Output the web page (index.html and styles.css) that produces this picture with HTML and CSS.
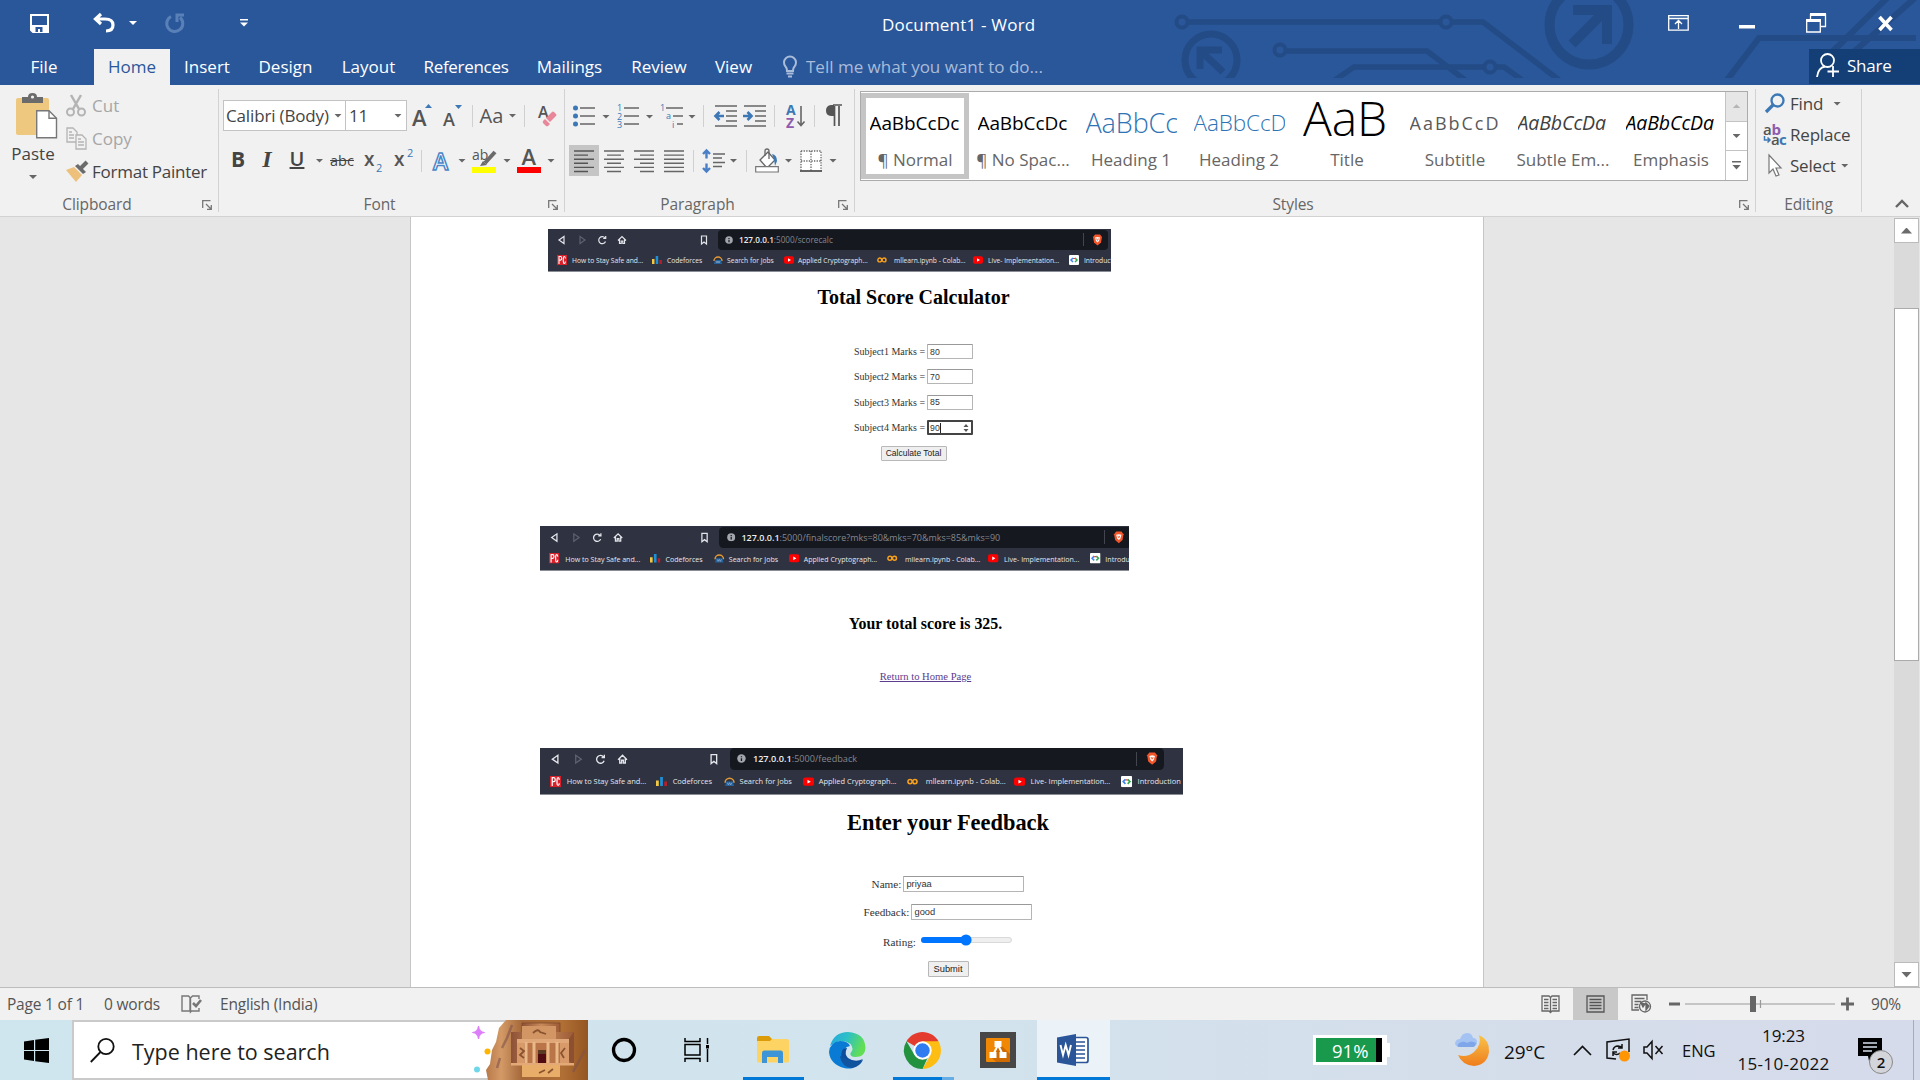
FILE: index.html
```
<!DOCTYPE html>
<html lang="en">
<head>
<meta charset="utf-8">
<title>Document1 - Word</title>
<link rel="stylesheet" href="styles.css">
</head>
<body>
<svg class="defs" aria-hidden="true">
  <symbol id="launcher" viewBox="0 0 10 10"><path d="M.7 8V.7H8.5M4 4l5 5M9.3 5v4.3H5" fill="none" stroke="#777" stroke-width="1.3"/></symbol>
  <symbol id="nav" viewBox="0 0 170 19"><g fill="none" stroke="#e4e5ea" stroke-width="1.2"><path d="M16 6.5v7l-5-3.500z"/><path d="M32 6.500v7l5-3.500z" stroke="#5d606f"/><path d="M57 8a3.500 3.500 0 1 0 .5 3.500M57.700 6v2.500h-2.500"/><path d="M70 10.500l4-4 4 4M71.500 9.500v4h1.700v-2.500h1.600v2.500h1.700v-4"/><path d="M153.500 6h5v8l-2.500-2-2.500 2z"/></g></symbol>
  <symbol id="pc" viewBox="0 0 10 10"><path d="M0 0h10v10H0z" fill="#d8212b"/><path d="M2 9V1.500h1.500q1.200 0 1.200 1.800t-1.200 1.800H2M8.300 3.500q0-2-1-2t-1 2v3q0 2 1 2t1-2" fill="none" stroke="#fff" stroke-width="1.100"/></symbol>
  <symbol id="cf" viewBox="0 0 10 10"><path d="M0 4h2.500v5H0z" fill="#f2c744"/><path d="M3.700 1h2.500v8H3.700z" fill="#1f8fd6"/><path d="M7.400 5h2.500v4H7.400z" fill="#b5202a"/></symbol>
  <symbol id="job" viewBox="0 0 10 10"><path d="M1 6a4 4 0 1 1 8 0" fill="none" stroke="#e39a35" stroke-width="1.400"/><path d="M2 5h6l1 4H1z" fill="#23639c"/><path d="M3 6l1 2 1-2 1 2 1-2" stroke="#9ac" fill="none" stroke-width=".7"/></symbol>
  <symbol id="yt" viewBox="0 0 10 10"><rect y="1.300" width="10" height="7.500" rx="2" fill="#f00"/><path d="M4 3.300v3.500l3-1.750z" fill="#fff"/></symbol>
  <symbol id="co" viewBox="0 0 12 10"><g fill="none" stroke="#f9a01b" stroke-width="1.700"><circle cx="3.300" cy="5" r="2.300"/><circle cx="8.500" cy="5" r="2.300"/></g></symbol>
  <symbol id="gd" viewBox="0 0 10 10"><rect width="10" height="10" rx="1" fill="#fff"/><path d="M4 3L2 5l2 2" fill="none" stroke="#4285f4" stroke-width="1.500"/><path d="M6 3l2 2-2 2" fill="none" stroke="#34a853" stroke-width="1.500"/><path d="M4 3.500h2" stroke="#ea4335" stroke-width="1.200"/></symbol>
  <symbol id="info" viewBox="0 0 8 8"><circle cx="4" cy="4" r="3.800" fill="#a3a6ad"/><path d="M4 2v1M4 3.800v2.400" stroke="#15181f" stroke-width="1.200"/></symbol>
  <symbol id="brave" viewBox="0 0 10 12"><path d="M2.500.5h5L9.500 3 8.500 8.500 5 11.500 1.500 8.500.5 3z" fill="#f4562a"/><path d="M2.500 3.500L5 3l2.500.5L6.500 7 5 8.500 3.500 7z" fill="#fff"/><path d="M4 4.500l1 2 1-2" stroke="#f4562a" fill="none" stroke-width=".8"/></symbol>
</svg>

<header class="titlebar">
  <svg class="circuit" width="780" height="78" viewBox="0 0 780 78" fill="none" stroke="#234b85" stroke-width="5.500">
    <circle cx="42" cy="22" r="5.500" stroke-width="4"/><path d="M48 22h252"/><circle cx="306" cy="22" r="5.500" stroke-width="4"/><path d="M312 22h31l76 58"/>
    <circle cx="140" cy="50" r="5.500" stroke-width="4"/><path d="M146 51h141l38 29M195 80l19-13h130M356 67h8l18 13"/><circle cx="350" cy="67" r="5.500" stroke-width="4"/>
    <circle cx="71" cy="60" r="26" stroke-width="7"/><path d="M83 72L64 54M60 69V50h22" stroke-width="7"/>
    <circle cx="449" cy="25" r="39.500" stroke-width="10"/><path d="M432 44l30-30M433 10h34v34" stroke-width="10"/>
    <path d="M587 80l32-42h157M748-3l-64 63M776-3l-68 60" stroke-width="6"/>
  </svg>
  <div class="title-row">
    <svg width="19" height="19" viewBox="0 0 19 19"><path d="M1 1h17v17H3l-2-2z" fill="none" stroke="#fff" stroke-width="2"/><path d="M1 11h17v7H3l-2-2z" fill="#fff"/><path d="M5.500 13h7v5h-2.500v-3h-2v3h-2.500z" fill="#2a579a"/></svg>
    <svg width="22" height="20" viewBox="0 0 22 20" fill="none" stroke="#fff" stroke-width="3.200"><path d="M8 1L2.500 6 8 11M3 6h9q8 0 8 6t-7 6"/></svg>
    <i class="caret white"></i>
    <svg width="21" height="20" viewBox="0 0 21 20" fill="none" stroke="#5a80b8" stroke-width="3"><path d="M6 3.500a8 8 0 1 0 9 1M12 9V2h7"/></svg>
    <svg width="8" height="8" viewBox="0 0 8 8" fill="#fff"><path d="M0 0h8v1.500H0zM0 3.500h8l-4 4z"/></svg>
    <span class="doc-title"><span>Document1 - Word</span></span>
    <svg width="21" height="16" viewBox="0 0 21 16" fill="none" stroke="#fff" stroke-width="1.300"><path d="M.7.7h19.500v14.500H.7zM.7 3.500h19.500M10.500 14V6M7 9l3.500-3.500L14 9"/></svg>
    <svg width="16" height="17" viewBox="0 0 16 17"><path d="M0 10h16v3.500H0z" fill="#fff"/></svg>
    <svg width="20" height="20" viewBox="0 0 20 20" fill="none" stroke="#fff"><path d="M4.500 6V1.500h15v12H15" stroke-width="1.300"/><path d="M4 1.500h16" stroke-width="3"/><path d="M.7 7.500h13.600v11.500H.7z" stroke-width="1.300"/><path d="M0 7.500h15" stroke-width="3"/></svg>
    <svg width="15" height="15" viewBox="0 0 15 15"><path d="M1.500 1l12 13M13.500 1l-12 13" stroke="#fff" stroke-width="3.600"/></svg>
  </div>
  <nav class="tabs">
    <span>File</span><span class="active">Home</span><span>Insert</span><span>Design</span><span>Layout</span><span>References</span><span>Mailings</span><span>Review</span><span>View</span>
    <span class="tell"><svg width="14" height="23" viewBox="0 0 14 23" fill="none" stroke="#a9bcd9" stroke-width="2"><path d="M4 16q0-3-1.500-4.500a6 6 0 1 1 9 0Q10 13 10 16z"/><path d="M3.500 18.500h7M5 21.500h4"/></svg><b>Tell me what you want to do...</b></span>
    <span class="share"><svg width="24" height="25" viewBox="0 0 24 25" fill="none" stroke="#fff" stroke-width="1.800"><circle cx="11.500" cy="7.500" r="6.500"/><path d="M1 24q1-9 8-10.500M17 13v11M11.500 18.500h11.500"/></svg><b>Share</b></span>
  </nav>
</header>

<section class="ribbon">
  <div class="group g-clip">
    <div class="clip-body">
      <div class="paste">
        <svg width="42" height="46" viewBox="0 0 42 46"><rect y="5" width="33" height="37" rx="2" fill="#edc87e"/><path d="M6 10V4h6q0-4 4.500-4T21 4h6v6z" fill="#6b6b6b"/><circle cx="16.500" cy="4" r="1.600" fill="#f1f1f1"/><path d="M20.700 17.700H33l7.500 7.500v19.500H20.700z" fill="#fff" stroke="#777" stroke-width="1.400"/><path d="M33 17.700v7.500h7.500" fill="none" stroke="#777" stroke-width="1.400"/></svg>
        <span>Paste</span><i class="caret"></i>
      </div>
      <div class="clip-list">
        <div class="dim"><svg width="20" height="22" viewBox="0 0 20 22" fill="none" stroke="#b4b4b4" stroke-width="2"><path d="M5 0l8 14M15 0L7 14" stroke-width="2.500"/><circle cx="4.500" cy="17" r="3.500"/><circle cx="15.500" cy="17" r="3.500"/></svg><span>Cut</span></div>
        <div class="dim"><svg width="21" height="23" viewBox="0 0 21 23" fill="#f1f1f1" stroke="#b4b4b4" stroke-width="1.300"><path d="M1 1h6l4 4v10H1zM3 5h3M3 8h5M3 11h5"/><path d="M10 8h6l4 4v10H10zM12 12h3M12 15h6M12 18h6"/></svg><span>Copy</span></div>
        <div><svg width="23" height="21" viewBox="0 0 23 21"><path d="M0 9l8-3 8 8-6 7z" fill="#edc07c"/><path d="M9 5l3-2 8 8-3 2z" fill="#6b6b6b"/><path d="M14 8l7-7" stroke="#6b6b6b" stroke-width="4"/></svg><span class="fp">Format Painter</span></div>
      </div>
    </div>
    <div class="glabel">Clipboard<svg width="10" height="10"><use href="#launcher"/></svg></div>
  </div>

  <div class="group g-font">
    <div class="tools font1">
      <div class="combo"><span>Calibri (Body)</span><i class="caret"></i></div>
      <div class="combo"><span>11</span><i class="caret"></i></div>
      <svg width="22" height="24" viewBox="0 0 22 24"><text class="t-ui" x="0" y="22" font-size="22">A</text><path d="M13 4l3.500-4L20 4z" fill="#3b78b5"/></svg>
      <svg width="20" height="24" viewBox="0 0 20 24"><text class="t-ui" x="0" y="22" font-size="18">A</text><path d="M12 1h7l-3.500 4z" fill="#3b78b5"/></svg>
      <i class="sep"></i><span class="aa">Aa</span><i class="caret"></i><i class="sep"></i>
      <svg width="20" height="24" viewBox="0 0 20 24"><text class="t-ui" x="0" y="14" font-size="16">A</text><path d="M8 14L14 8q1-1 2 0l2 2q1 1 0 2l-6 6z" fill="#e8879a"/><path d="M7 15l5 5-2 2q-1 .5-2 0l-3-3q-.5-1 0-2z" fill="#e8879a"/></svg>
    </div>
    <div class="tools font2">
      <b class="ico-b">B</b><b class="ico-i">I</b><b class="ico-u">U</b><i class="caret"></i>
      <span class="ico-s">abc</span>
      <svg width="20" height="26" viewBox="0 0 20 26"><text class="t-ui" x="0" y="18" font-size="19">x</text><text class="t-blue" x="12" y="24" font-size="11">2</text></svg>
      <svg width="20" height="26" viewBox="0 0 20 26"><text class="t-ui" x="0" y="18" font-size="19">x</text><text class="t-blue" x="13" y="9" font-size="11">2</text></svg>
      <i class="sep"></i>
      <svg width="20" height="24" viewBox="0 0 20 24"><text x="1" y="20.500" font-size="23" class="t-fx">A</text></svg><i class="caret"></i>
      <svg width="26" height="24" viewBox="0 0 26 24"><text class="t-thin" x="0" y="11" font-size="14">ab</text><path d="M23 3L13 14" stroke="#6b6b6b" stroke-width="4"/><path d="M11 12l4 4-7 1z" fill="#6b6b6b"/><path d="M0 18h24v6H0z" fill="#ff0"/></svg><i class="caret"></i>
      <svg width="24" height="24" viewBox="0 0 24 24"><text class="t-ui" x="4.500" y="16" font-size="22">A</text><path d="M0 18h24v6H0z" fill="red"/></svg><i class="caret"></i>
    </div>
    <div class="glabel">Font<svg width="10" height="10"><use href="#launcher"/></svg></div>
  </div>

  <div class="group g-para">
    <div class="tools para1">
      <svg width="22" height="22" viewBox="0 0 22 22"><path d="M7 3h15M7 11h15M7 19h15" stroke="#666" stroke-width="1.500"/><g fill="#3b78b5"><circle cx="2.500" cy="3" r="2.500"/><circle cx="2.500" cy="11" r="2.500"/><circle cx="2.500" cy="19" r="2.500"/></g></svg><i class="caret low"></i>
      <svg width="22" height="24" viewBox="0 0 22 24"><path d="M7 4h15M7 12h15M7 20h15" stroke="#666" stroke-width="1.500"/><g class="t-num" font-size="9"><text y="7">1</text><text y="15.500">2</text><text y="24">3</text></g></svg><i class="caret low"></i>
      <svg width="23" height="24" viewBox="0 0 23 24"><path d="M6 4h17M13 12h10M17 20h6" stroke="#666" stroke-width="1.500"/><g class="t-num" font-size="9"><text y="7">1</text><text x="6" y="15">a</text><text x="12" y="23.500">i</text></g></svg><i class="caret low"></i>
      <i class="sep"></i>
      <svg width="23" height="22" viewBox="0 0 23 22"><path d="M1 1h22M12 6h11M12 11h11M12 16h11M1 21h22" stroke="#666" stroke-width="1.400"/><path d="M10 11H2M5.500 7L1.500 11l4 4" stroke="#3b78b5" stroke-width="2.600" fill="none"/></svg>
      <svg width="23" height="22" viewBox="0 0 23 22"><path d="M1 1h22M12 6h11M12 11h11M12 16h11M1 21h22" stroke="#666" stroke-width="1.400"/><path d="M0 11h8M4.500 7l4 4-4 4" stroke="#3b78b5" stroke-width="2.600" fill="none"/></svg>
      <i class="sep"></i>
      <svg width="20" height="24" viewBox="0 0 20 24"><text x="0" y="11" font-size="14" class="t-blue bold">A</text><text x="0" y="23.500" font-size="14" class="t-purple">Z</text><path d="M15 2v19M11.500 17.500L15 21.500l3.500-4" fill="none" stroke="#666" stroke-width="1.600"/></svg>
      <i class="sep"></i>
      <svg width="18" height="22" viewBox="0 0 18 22"><path d="M8 0h9M9.500 1v20M14 1v20" stroke="#555" stroke-width="1.700"/><path d="M9 0v11H6Q1 10.500 1 5.500T6 0z" fill="#555"/></svg>
    </div>
    <div class="tools para2">
      <span class="pressed"><svg width="20" height="22" viewBox="0 0 20 22"><path d="M0 1h20M0 5.100h14M0 9.200h20M0 13.300h14M0 17.400h20M0 21.500h14" stroke="#555" stroke-width="1.400"/></svg></span>
      <svg width="20" height="22" viewBox="0 0 20 22"><path d="M0 1h20M3 5.100h14M0 9.200h20M3 13.300h14M0 17.400h20M3 21.500h14" stroke="#666" stroke-width="1.400"/></svg>
      <svg width="20" height="22" viewBox="0 0 20 22"><path d="M0 1h20M6 5.100h14M0 9.200h20M6 13.300h14M0 17.400h20M6 21.500h14" stroke="#666" stroke-width="1.400"/></svg>
      <svg width="20" height="22" viewBox="0 0 20 22"><path d="M0 1h20M0 5.100h20M0 9.200h20M0 13.300h20M0 17.400h20M0 21.500h20" stroke="#666" stroke-width="1.400"/></svg>
      <i class="sep"></i>
      <svg width="23" height="24" viewBox="0 0 23 24"><path d="M11 5h12M11 9h9M11 13.500h12M11 17.500h9" stroke="#666" stroke-width="1.400"/><path d="M4.500 1.500v8M4.500 14.500v8M1 5l3.500-3.500L8 5M1 19l3.500 3.500L8 19" fill="none" stroke="#4a7fc8" stroke-width="2.400"/></svg><i class="caret"></i>
      <i class="sep"></i>
      <svg width="24" height="25" viewBox="0 0 24 25"><path d="M5 12l8-8 7 8-8 8z" fill="#fff" stroke="#666" stroke-width="1.300"/><path d="M10 8V3q0-2 2-2t2 2v8" fill="none" stroke="#666" stroke-width="1.300"/><path d="M17 6q5 1 5 7l-2 5-1-7z" fill="#3b78b5"/><path d="M.7 18.700h22.600V24H.7z" fill="#fff" stroke="#777" stroke-width="1.200"/></svg><i class="caret"></i>
      <svg width="22" height="22" viewBox="0 0 22 22"><path d="M1 1h20v20H1z" fill="#fff"/><path d="M1 1h20v20M1 1v20M11 1v20M1 11h20" fill="none" stroke="#666" stroke-width="1.300" stroke-dasharray="1.300 1.300"/><path d="M0 21h22" stroke="#555" stroke-width="1.800"/></svg><i class="caret"></i>
    </div>
    <div class="glabel">Paragraph<svg width="10" height="10"><use href="#launcher"/></svg></div>
  </div>

  <div class="group g-styles">
    <div class="gallery">
      <div class="style sel"><span class="pv">AaBbCcDc</span><span>¶ Normal</span></div>
      <div class="style"><span class="pv">AaBbCcDc</span><span class="nsp">¶ No Spac...</span></div>
      <div class="style"><span class="pv h1">AaBbCc</span><span>Heading 1</span></div>
      <div class="style"><span class="pv h2">AaBbCcD</span><span>Heading 2</span></div>
      <div class="style"><span class="pv ttl">AaB</span><span>Title</span></div>
      <div class="style"><span class="pv sub">AaBbCcD</span><span>Subtitle</span></div>
      <div class="style"><span class="pv em soft">AaBbCcDa</span><span>Subtle Em...</span></div>
      <div class="style"><span class="pv em">AaBbCcDa</span><span>Emphasis</span></div>
      <div class="gscroll"><span class="off"><i class="caret up"></i></span><span><i class="caret"></i></span><span><svg width="9" height="9" viewBox="0 0 9 9" fill="#666"><path d="M0 0h9v1.500H0zM.5 4h8l-4 4.500z"/></svg></span></div>
    </div>
    <div class="glabel">Styles<svg width="10" height="10"><use href="#launcher"/></svg></div>
  </div>

  <div class="group g-edit">
    <div class="edit-list">
      <div><svg width="21" height="21" viewBox="0 0 21 21" fill="none" stroke="#3b78b5"><circle cx="12.500" cy="7.500" r="6" stroke-width="2.300"/><path d="M8 12l-7 7" stroke-width="3.200"/></svg><span>Find</span><i class="caret"></i></div>
      <div><svg width="24" height="24" viewBox="0 0 24 24"><text x="0" y="12" font-size="15" class="t-ui">a</text><text x="8.500" y="12" font-size="15" class="t-purple">b</text><text x="8" y="22" font-size="15" class="t-ui">a</text><text x="16" y="22" font-size="15" class="t-blue bold">c</text><path d="M1.500 13v4h5M4.500 14.500L7 17l-2.500 2.500" fill="none" stroke="#3b78b5" stroke-width="1.500"/></svg><span>Replace</span></div>
      <div><svg width="16" height="24" viewBox="0 0 16 24"><path d="M2 1l12 13H9l3 7-3 1-3-7-4 4z" fill="#fff" stroke="#777" stroke-width="1.200"/></svg><span>Select</span><i class="caret near"></i></div>
    </div>
    <div class="glabel">Editing</div>
  </div>
  <div class="collapse"><svg width="14" height="9" viewBox="0 0 14 9"><path d="M1 8l6-6 6 6" fill="none" stroke="#666" stroke-width="2.400"/></svg></div>
</section>

<main class="workspace">
  <article class="page">
    <section class="shot s1">
      <div class="browser">
        <div class="nav"><svg class="navi"><use href="#nav"/></svg><div class="pill"><svg><use href="#info"/></svg><span class="u1"><b>127.0.0.1</b>:5000/scorecalc</span><i class="bar"></i><svg class="brave"><use href="#brave"/></svg></div></div>
        <div class="marks"><svg><use href="#pc"/></svg><span>How to Stay Safe and...</span><svg><use href="#cf"/></svg><span>Codeforces</span><svg><use href="#job"/></svg><span>Search for Jobs</span><svg><use href="#yt"/></svg><span>Applied Cryptograph...</span><svg><use href="#co"/></svg><span>mllearn.ipynb - Colab...</span><svg><use href="#yt"/></svg><span>Live- Implementation...</span><svg><use href="#gd"/></svg><span>Introduct</span></div>
      </div>
      <div class="web">
        <h1>Total Score Calculator</h1>
        <div class="field">Subject1 Marks =<span class="inp">80</span></div>
        <div class="field">Subject2 Marks =<span class="inp">70</span></div>
        <div class="field">Subject3 Marks =<span class="inp">85</span></div>
        <div class="field">Subject4 Marks =<span class="inp focus"><span class="cur">90</span><svg width="6" height="10" viewBox="0 0 6 10" fill="#555"><path d="M.5 4L3 1l2.500 3zM.5 6L3 9l2.500-3z"/></svg></span></div>
        <span class="btn">Calculate Total</span>
      </div>
    </section>
    <section class="shot s2">
      <div class="browser">
        <div class="nav"><svg class="navi"><use href="#nav"/></svg><div class="pill"><svg><use href="#info"/></svg><span class="u2"><b>127.0.0.1</b>:5000/finalscore?mks=80&amp;mks=70&amp;mks=85&amp;mks=90</span><i class="bar"></i><svg class="brave"><use href="#brave"/></svg></div></div>
        <div class="marks"><svg><use href="#pc"/></svg><span>How to Stay Safe and...</span><svg><use href="#cf"/></svg><span>Codeforces</span><svg><use href="#job"/></svg><span>Search for Jobs</span><svg><use href="#yt"/></svg><span>Applied Cryptograph...</span><svg><use href="#co"/></svg><span>mllearn.ipynb - Colab...</span><svg><use href="#yt"/></svg><span>Live- Implementation...</span><svg><use href="#gd"/></svg><span>Introdu</span></div>
      </div>
      <div class="web">
        <h2>Your total score is 325.</h2>
        <a>Return to Home Page</a>
      </div>
    </section>
    <section class="shot s3">
      <div class="browser">
        <div class="nav"><svg class="navi"><use href="#nav"/></svg><div class="pill"><svg><use href="#info"/></svg><span class="u3"><b>127.0.0.1</b>:5000/feedback</span><i class="bar"></i><svg class="brave"><use href="#brave"/></svg></div></div>
        <div class="marks"><svg><use href="#pc"/></svg><span>How to Stay Safe and...</span><svg><use href="#cf"/></svg><span>Codeforces</span><svg><use href="#job"/></svg><span>Search for Jobs</span><svg><use href="#yt"/></svg><span>Applied Cryptograph...</span><svg><use href="#co"/></svg><span>mllearn.ipynb - Colab...</span><svg><use href="#yt"/></svg><span>Live- Implementation...</span><svg><use href="#gd"/></svg><span>Introduction</span></div>
      </div>
      <div class="web">
        <h1>Enter your Feedback</h1>
        <div class="field">Name:<span class="inp">priyaa</span></div>
        <div class="field">Feedback:<span class="inp">good</span></div>
        <div class="field rate">Rating:<svg width="91" height="12" viewBox="0 0 91 12"><rect x=".5" y="3.500" width="90" height="5" rx="2.500" fill="#efefef" stroke="#ccc" stroke-width=".7"/><rect y="3" width="46" height="6" rx="3" fill="#0075ff"/><circle cx="45" cy="6" r="5.600" fill="#0075ff"/></svg></div>
        <span class="btn">Submit</span>
      </div>
    </section>
  </article>
  <aside class="scrollbar"><span class="sb-btn"><i class="caret up big"></i></span><span class="sb-track"><span class="sb-thumb"></span></span><span class="sb-btn"><i class="caret big"></i></span></aside>
</main>

<footer class="status">
  <span class="st1">Page 1 of 1</span><span class="st2">0 words</span>
  <svg width="21" height="18" viewBox="0 0 21 18" fill="none" stroke="#777" stroke-width="1.400"><path d="M9 2v14H1V1h6.500L9.500 3 11.500 1H18v3M9.500 3v14l1-1H18v-3"/><path d="M12 8l3 3 5-6" stroke-width="2.600"/></svg>
  <span class="st3">English (India)</span>
  <div class="st-right">
    <svg width="19" height="18" viewBox="0 0 19 18" fill="none" stroke="#666" stroke-width="1.300"><path d="M9.500 2.500L8 1H1v15h7l1.500 1.500L11 16h7V1h-7zV17M3 4.500h4.500M3 7.500h4.500M3 10.500h4.500M3 13.500h4.500M11.500 4.500H16M11.500 7.500H16M11.500 10.500H16M11.500 13.500H16"/></svg>
    <span class="view-on"><svg width="19" height="18" viewBox="0 0 19 18" fill="none" stroke="#555" stroke-width="1.300"><path d="M1 1h17v16H1zM3.500 4.500h12M3.500 7.500h12M3.500 10.500h12M3.500 13.500h12"/></svg></span>
    <svg width="20" height="19" viewBox="0 0 20 19" fill="none" stroke="#666" stroke-width="1.300"><path d="M8 16H1V1h15v5M3.500 4.500h10M3.500 7.500h7M3.500 10.500h4M3.500 13.500h4"/><circle cx="14" cy="12.500" r="5.500" fill="#f1f1f1"/><path d="M10 9l4 1-2 3zM15 9l3 3-3 4z" fill="#666"/></svg>
    <svg class="zoomer" width="186" height="18" viewBox="0 0 186 18"><path d="M0 9h11M172 9h13M178.500 2.500v13" stroke="#666" stroke-width="2.800"/><path d="M16 9h150M91.500 5v8" stroke="#999" stroke-width="1.200"/><path d="M81 1h6v16h-6z" fill="#666"/></svg>
    <span class="pct">90%</span>
  </div>
</footer>

<footer class="taskbar">
  <div class="start"><svg width="25" height="25" viewBox="0 0 25 25"><path d="M0 3.500l10-1.500v10H0zM11.200 1.800L25 0v12H11.200zM0 13h10v10L0 21.500zM11.200 13H25v12l-13.800-1.800z"/></svg></div>
  <div class="search">
    <svg width="25" height="25" viewBox="0 0 25 25" fill="none" stroke="#111" stroke-width="1.800"><circle cx="16" cy="8.500" r="7.700"/><path d="M10.500 14L.8 24"/></svg>
    <span>Type here to search</span>
    <svg class="petra" width="116" height="60" viewBox="0 0 116 60">
      <defs><linearGradient id="rock"><stop offset="0" stop-color="#b9794a"/><stop offset=".15" stop-color="#d39a66"/><stop offset=".35" stop-color="#a5683a"/><stop offset=".75" stop-color="#b06f35"/><stop offset="1" stop-color="#955521"/></linearGradient><linearGradient id="blk" x2="1" y2="0"><stop offset="0" stop-color="#8d5136"/><stop offset=".5" stop-color="#c98a5a"/><stop offset="1" stop-color="#9b5a35"/></linearGradient></defs>
      <path d="M34 0L27 8 24 22 20 30 18 44 14 50 16 60H116V0z" fill="url(#rock)"/>
      <path d="M40 5l-5 13-5 10M113 30l-12 22M28 38l-3 10" stroke="#80524c" stroke-width="2.500" fill="none" opacity=".6"/>
      <path d="M50 3h38v20H50z" fill="url(#blk)" stroke="#7a4525" stroke-width=".7"/><path d="M39 12h63v33H39z" fill="url(#blk)"/><path d="M102 12v33l-6-5V20z" fill="#8c4f31"/>
      <path d="M50 6h34v14H50z" fill="#d29664"/><path d="M45 19h52v4H45z" fill="#e0a878"/><path d="M45 23h52v20H45z" fill="#b97548"/><path d="M45 23h7v20h-7zM88 23h9v20h-9z" fill="#d89a68"/><path d="M54 22v22M62 22v22M76 22v22M85 22v22" stroke="#eab98a" stroke-width="3"/><path d="M66 30h8v14h-8z" fill="#4f0d12"/><path d="M66 30h8v4h-8z" fill="#5a3a22"/><path d="M39 43h63v2.500H39z" fill="#e3aa78"/>
      <path d="M50 45h38v12H50z" fill="#e8ad68"/><path d="M61 13q5-5 7-1l6 2M67 53l6-3M76 53l5-4M48 28l4 3-4 4 4 3M93 28l-4 5 3 5" stroke="#8a5330" stroke-width="1.800" fill="none"/>
      <path d="M6.500 6q1 6 6 6.500-5 .5-6 6.500-1-6-6-6.500 5-.5 6-6.500z" fill="#dd7dfb" stroke="#dd7dfb" stroke-width="1"/><circle cx="15.500" cy="31.500" r="3" fill="#ffb400"/><circle cx="5" cy="49.500" r="3" fill="#6fd8e8"/>
    </svg>
  </div>
  <div class="apps">
    <span><svg width="26" height="26" viewBox="0 0 26 26"><circle cx="13" cy="13" r="10.500" fill="none" stroke="#000" stroke-width="3.300"/></svg></span>
    <span><svg width="25" height="24" viewBox="0 0 25 24" fill="none" stroke="#000" stroke-width="1.500"><path d="M1 0v3.500h15V0M1 6.500h15v10.500H1zM1 24v-3.500h15V24M23.500 0v6M23.500 11v13"/><path d="M22 7h3v3.500h-3z" fill="#000" stroke="none"/></svg></span>
    <span class="run r1"><svg width="32" height="28" viewBox="0 0 32 28"><path d="M0 2q0-2 2-2h10l3 3v6H0z" fill="#dc9c0a"/><path d="M0 5h13l2-2h15q2 0 2 2v20q0 1.500-2 1.500H2Q0 26.500 0 25z" fill="#fdd363"/><path d="M5 27V17q0-2.500 2-2.500h17q2 0 2 2.500v10h-5v-6H10v6z" fill="#3d94d6"/></svg></span>
    <span><svg width="37" height="37" viewBox="0 0 37 37"><defs><linearGradient id="eg" y2=".3"><stop offset="0" stop-color="#24a6e0"/><stop offset=".5" stop-color="#2cc0c6"/><stop offset="1" stop-color="#62de55"/></linearGradient></defs><path d="M1 14Q5 0 19 0 36 1 36.500 16q-.5 9-10 9-6 0-5-4 4-4 0-9Q12 5 1 14z" fill="url(#eg)"/><path d="M0 20Q1 10 11 9q8 0 10 5-7 1-7 9 1 9 10 13-4 1-9 0Q1 32 0 20z" fill="#0a7bd4"/><path d="M13 19q-3 11 7 14 9 1 14-6-8 4-15-1-4-4-1-10-4 0-5 3z" fill="#0d4d9b"/><path d="M11 24q2 12 13 12 7-2 10-8-8 4-15-1z" fill="#10539f"/></svg></span>
    <span class="run r2"><svg width="37" height="37" viewBox="0 0 37 37"><path d="M18.500 18.500L2.500 9.200A18.500 18.500 0 0 1 34.500 9.300z" fill="#e33b2e"/><path d="M18.500 9.300h16a18.500 18.500 0 0 1-16 27.700l8-14z" fill="#fdbd12"/><path d="M2.500 9.200l8 13.900q5 6 13 3L18.500 37A18.500 18.500 0 0 1 2.500 9.200z" fill="#22923f"/><circle cx="18.500" cy="18.500" r="9.200" fill="#fff"/><circle cx="18.500" cy="18.500" r="7.200" fill="#2f7bf0"/></svg></span>
    <span class="drawio"><svg width="36" height="36" viewBox="0 0 36 36"><path d="M0 0h36v36H0z" fill="#474747"/><rect x="6" y="6" width="24" height="24" rx="1" fill="#f08705"/><path d="M20 12l10 10v8H16l-6-6z" fill="#cf6a00"/><path d="M18 13l-5 10M18 13l5 10" stroke="#fff" stroke-width="2"/><path d="M14.500 9h7v6h-7zM9.500 20h7v6h-7zM19.500 20h7v6h-7z" fill="#fff"/></svg></span>
    <span class="run r3"><svg width="32" height="32" viewBox="0 0 32 32"><path d="M16 3.500h13q2 0 2 2v21q0 2-2 2H16" fill="#fff" stroke="#2a5699" stroke-width="1.700"/><path d="M19 8h9M19 12h9M19 16h9M19 20h9M19 24h9" stroke="#2a5699" stroke-width="1.700"/><path d="M0 3.500L19 0v32L0 28.500z" fill="#2a5699"/><path d="M3.500 11l2.500 10 2.700-10L11.500 21 14 11" fill="none" stroke="#fff" stroke-width="1.900"/></svg></span>
  </div>
  <div class="tray">
    <div class="battery"><span>91%</span></div><i class="nub"></i>
    <svg class="moon" width="35" height="34" viewBox="0 0 35 34"><defs><linearGradient id="mg" x2="0" y2="1"><stop offset="0" stop-color="#f8c44a"/><stop offset="1" stop-color="#ef7d1c"/></linearGradient></defs><path d="M24 2q11 5 10 17-2 13-15 14-12-1-16-11 9 3 16-3 8-7 5-17z" fill="url(#mg)"/><path d="M4 14q-4-1-4-4 1-4 5-4 2-6 7-6t6 5q4 0 4 4t-4 5z" fill="#a4c3f3"/><path d="M3 11q5-4 9-1 4-3 9 0-1 4-3 4H4q-2 0-1-3z" fill="#7fa6e8"/></svg>
    <span class="temp">29°C</span>
    <svg class="chev" width="19" height="11" viewBox="0 0 19 11"><path d="M1 10l8.500-8.500L18 10" fill="none" stroke="#111" stroke-width="1.700"/></svg>
    <svg class="upd" width="25" height="24" viewBox="0 0 25 24"><path d="M10 21L1 20V4l22-3v13" fill="none" stroke="#111" stroke-width="1.500"/><path d="M7 12q1-4 5-4l4 1M16 6v4h-4M7 18v-4h4M7 15q4 3 7 0" fill="none" stroke="#111" stroke-width="1.500"/><circle cx="18.500" cy="18" r="5.500" fill="#ff9500"/></svg>
    <svg class="spk" width="21" height="20" viewBox="0 0 21 20"><path d="M1 7h3l5-5.500v17L4 13H1zM12.500 6l7 8M19.500 6l-7 8" fill="none" stroke="#111" stroke-width="1.500"/></svg>
    <span class="eng">ENG</span>
    <div class="clock"><span>19:23</span><span class="date">15-10-2022</span></div>
    <div class="note"><svg width="24" height="24" viewBox="0 0 24 24"><path d="M0 0h24v18h-9l-4 5-1-5H0z"/><path d="M5 5h14M5 9h14M5 13h9" stroke="#d8dfec" stroke-width="1.300"/></svg><b>2</b></div>
    <i class="peek"></i>
  </div>
</footer>
</body>
</html>
```
FILE: styles.css
```
* { box-sizing: border-box; }
body { margin: 0; width: 1920px; height: 1080px; overflow: hidden; display: flex; flex-direction: column; font-family: "Open Sans", "Noto Sans", sans-serif; font-size: 17px; color: #444; background: #e6e6e6; }
svg { display: block; flex: none; overflow: visible; }
span, b { white-space: nowrap; }
.defs { position: absolute; width: 0; height: 0; }

.caret { display: block; flex: none; width: 8px; height: 4px; background: #666; clip-path: polygon(0 0, 100% 0, 50% 100%); }
.caret.white { background: #fff; }
.caret.up { clip-path: polygon(0 100%, 50% 0, 100% 100%); }
.caret.low { transform: translateY(1px); }
.caret.big { width: 11px; height: 6px; background: #6b6b6b; }
.sep { display: block; width: 1px; height: 22px; background: #d0d0d0; }

/* title bar and tabs */
.titlebar { position: relative; height: 85px; background: #2a579a; color: #fff; display: flex; flex-direction: column; }
.circuit { position: absolute; left: 1140px; top: 0; overflow: hidden; }
.title-row { position: relative; height: 49px; padding-left: 30px; display: grid; grid-template-columns: 63px 36px 36px 75px 642px 786px 71px 67px 72px auto; align-items: center; }
.title-row > svg, .title-row > i { margin-top: -3px; }
.doc-title { letter-spacing: .2px; }
.tabs { position: relative; height: 36px; display: flex; }
.tabs > span { display: flex; align-items: center; justify-content: center; flex: none; padding-bottom: 2px; height: 36px; }
.tabs > span:nth-child(1) { width: 88px; margin-right: 6px; }
.tabs > span:nth-child(2) { width: 76px; }
.tabs > span:nth-child(3) { width: 74px; }
.tabs > span:nth-child(4) { width: 83px; }
.tabs > span:nth-child(5) { width: 83px; }
.tabs > span:nth-child(6) { width: 112px; letter-spacing: -.3px; }
.tabs > span:nth-child(7) { width: 95px; }
.tabs > span:nth-child(8) { width: 84px; }
.tabs > span:nth-child(9) { width: 65px; }
.tabs .active { background: #f1f1f1; color: #2a579a; }
.tabs .tell { margin-left: 17px; gap: 9px; color: #a9bcd9; }
.tabs b { font-weight: 400; }
.tabs .share { margin-left: auto; width: 111px; height: 35px; background: #133f76; justify-content: flex-start; padding-left: 7px; gap: 7px; letter-spacing: -.2px; }

/* ribbon */
.ribbon { height: 132px; flex: none; background: #f1f1f1; border-bottom: 1px solid #d2d2d2; display: flex; padding-top: 4px; }
.group { height: 123px; border-right: 1px solid #d2d2d2; display: flex; flex-direction: column; flex: none; }
.glabel { position: relative; margin-top: auto; height: 18px; line-height: 20px; text-align: center; font-size: 15.500px; color: #666; padding-right: 24px; letter-spacing: -.1px; }
.glabel svg { position: absolute; right: 6px; top: 6px; }
.g-clip { width: 219px; } .g-font { width: 346px; } .g-para { width: 290px; } .g-styles { width: 901px; } .g-edit { width: 106px; }
.g-edit .glabel { padding-right: 0; }
.clip-body { display: flex; height: 99px; }
.paste { width: 66px; padding-top: 4px; display: flex; flex-direction: column; align-items: center; }
.paste svg { margin-left: 7px; }
.paste span { margin-top: 3px; line-height: 24px; }
.paste .caret { margin-top: 9px; }
.clip-list div { display: grid; grid-template-columns: 26px auto; align-items: center; height: 33px; }
.clip-list .fp { letter-spacing: -.25px; }
.dim { color: #a6a6a6; }
.tools { display: grid; height: 31px; align-items: center; justify-items: center; }
.font1 { margin: 11px 0 0 4px; grid-template-columns: 123px 61px 31px 30px 8px 31px 11px 13px 33px; }
.font2 { margin: 14px 0 0 4px; grid-template-columns: 30px 28px 32px 13px 32px 32px 27px 9px 31px 10px 35px 10px 34px 10px; }
.para1 { margin: 11px 0 0 0; grid-template-columns: 37px 8px 35px 9px 34px 8px 15px 28px 31px 8px 35px 2px 38px; }
.para2 { margin: 14px 0 0 4px; grid-template-columns: 30px 30px 30px 30px 9px 31px 9px 16px 26px 17px 28px 16px; }
.combo { width: 100%; height: 31px; background: #fff; border: 1px solid #c3c3c3; display: flex; align-items: center; justify-content: space-between; padding: 0 3px 0 2px; }
.combo span { letter-spacing: -.15px; }
.combo + .combo { border-left: 0; padding: 0 4px 0 3px; }
.t-ui { font-weight: 600; fill: #555; }
.t-thin { fill: #555; }
.t-blue, .t-num { fill: #3b78b5; }
.bold { font-weight: 700; }
.t-purple { fill: #8e5bae; font-weight: 700; }
.t-fx { fill: #fff; stroke: #4a86c8; stroke-width: 1.500px; font-weight: 600; }
.aa { font-size: 20px; color: #555; }
.ico-b { font-size: 21px; line-height: 24px; margin-top: -3px; }
.ico-i { font-size: 24px; line-height: 24px; font-family: "Liberation Serif", serif; font-style: italic; margin-top: -3px; }
.ico-u { font-size: 20px; line-height: 22px; font-weight: 600; text-decoration: underline; margin-top: -3px; }
.ico-s { font-size: 14.500px; text-decoration: line-through; }
.pressed { width: 30px; height: 31px; background: #c5c5c5; display: flex; align-items: center; justify-content: center; }
.gallery { margin: 2px 0 0 5px; width: 888px; height: 90px; background: #fff; border: 1px solid #ababab; display: flex; }
.style { width: 108px; flex: none; display: flex; flex-direction: column; align-items: center; padding-top: 9px; }
.style.sel { box-shadow: inset 0 0 0 5px #c5c5c5; height: 86px; margin-top: 1px; padding-top: 8px; }
.style span { color: #666; line-height: 24px; }
.style .pv { width: 91px; height: 44px; line-height: 44px; font-size: 19px; letter-spacing: -.1px; overflow: hidden; color: #000; margin-bottom: 3px; }
.style .h1 { font-size: 27px; font-weight: 300; color: #2e74b5; }
.style .h2 { font-size: 22.500px; font-weight: 300; color: #2e74b5; }
.style .ttl { font-size: 48px; font-weight: 300; line-height: 33px; width: 88px; }
.style .sub { font-size: 18px; letter-spacing: 2px; color: #5a5a5a; }
.style .em { font-style: italic; font-size: 19.500px; }
.style .soft { color: #404040; }
.gscroll { margin-left: auto; width: 22px; border-left: 1px solid #c3c3c3; display: flex; flex-direction: column; }
.gscroll span { flex: 1; display: flex; align-items: center; justify-content: center; border-bottom: 1px solid #c3c3c3; }
.gscroll span:last-child { border-bottom: 0; }
.gscroll .off { background: #e6e6e6; }
.gscroll .off .caret { background: #b5b5b5; }
.edit-list { padding: 0 0 0 7px; margin-top: -1px; }
.edit-list div { height: 31px; display: grid; grid-template-columns: 27px auto 1fr; align-items: center; }
.edit-list span { letter-spacing: -.2px; }
.edit-list .caret { margin-left: 10px; }
.edit-list .near { margin-left: 5px; }
.edit-list svg { justify-self: center; margin-right: 3px; }
.collapse { margin: auto 11px 8px auto; }

/* document area */
.workspace { height: 770px; flex: none; display: flex; background: #e6e6e6; padding-left: 410px; }
.page { width: 1074px; height: 770px; background: #fff; border: solid #c6c6c6; border-width: 0 1px; overflow: hidden; padding: 12px 0 0 129px; }
.scrollbar { margin-left: auto; width: 26px; height: 770px; padding: 1px 1px 0 0; display: flex; flex-direction: column; }
.sb-btn { height: 25px; background: #fff; border: 1px solid #bbb; display: flex; align-items: center; justify-content: center; }
.sb-track { flex: 1; background: #dadada; padding-top: 65px; }
.sb-thumb { display: block; height: 353px; background: #fff; border: 1px solid #ababab; }

.shot { font-family: "Liberation Serif", serif; color: #333; }
.browser { overflow: hidden; background: #2f3241; border-bottom: 1px solid #8b8d96; font-family: "Open Sans", "Noto Sans", sans-serif; color: #e6e7eb; }
.s1 { padding-left: 8px; height: 297px; }
.s2 { height: 222px; }
.s1 .browser { font-size: 10px; width: 563px; height: 43px; }
.s2 .browser { font-size: 10.550px; width: 589px; height: 45px; }
.s3 .browser { font-size: 11.150px; width: 643px; height: 47px; }
.nav { width: 63em; height: 2.150em; display: flex; padding-top: .1em; }
.s3 .nav { height: 2.050em; padding-top: 0; }
.navi { width: 17em; height: 1.900em; }
.pill { width: 39em; height: 1.950em; background: #15181f; border-radius: .4em; display: flex; align-items: center; padding-left: .7em; }
.pill svg { width: .8em; height: .8em; margin-right: .6em; }
.pill span { font-size: .82em; color: #85878e; }
.pill b { font-weight: 600; color: #eee; }
.pill .u2 { font-size: .85em; }
.pill .bar { width: 1px; height: 1.300em; margin: 0 .8em 0 auto; background: #43464f; }
.pill .brave { width: 1.100em; height: 1.200em; margin: 0 .55em 0 0; }
.marks { display: grid; width: 63em; grid-template-columns: 1.500em 8em 1.500em 4.600em 1.400em 5.700em 1.400em 7.900em 1.700em 7.900em 1.500em 8.100em 1.500em auto; padding-left: .9em; height: 1.900em; align-items: center; }
.marks svg { width: 1em; height: 1em; }
.marks span { font-size: .67em; }
.web { display: flex; flex-direction: column; align-items: center; }
.web h1, .web h2 { margin: 0; color: #000; white-space: nowrap; }
.field { display: flex; align-items: center; white-space: nowrap; }
.inp { font-family: "Liberation Sans", sans-serif; border: 1px solid #b5b5b5; border-top-color: #999; border-radius: 1px; background: #fff; display: flex; align-items: center; }
.btn { font-family: "Liberation Sans", sans-serif; border: 1px solid #b8b8b8; border-radius: 1px; background: #efefef; color: #222; text-align: center; }
.s1 .web { width: 731px; font-size: 10px; }
.s1 h1 { font-size: 20px; line-height: 24px; margin: 13px 0 35px; }
.s1 .field { height: 15px; margin-bottom: 10.400px; gap: 2px; }
.s1 .inp { width: 46px; height: 15px; font-size: 8.700px; padding-left: 2px; }
.s1 .focus { border: 2px solid #444; justify-content: space-between; padding: 0 2px 0 1px; }
.cur { border-right: 1px solid #222; }
.s1 .btn { width: 66px; height: 15px; line-height: 13px; font-size: 8.500px; }
.s2 .web { width: 771px; }
.s2 h2 { font-size: 15.900px; line-height: 18px; margin: 44px 0 38px; }
.s2 a { font-size: 10.600px; line-height: 12px; color: #5c3c8c; text-decoration: underline; white-space: nowrap; }
.s3 .web { width: 816px; font-size: 11.200px; }
.s3 h1 { font-size: 22.400px; line-height: 26px; margin: 15px 0 40px; }
.s3 .field { height: 16px; margin-bottom: 12.300px; gap: 2px; }
.s3 .inp { width: 121px; height: 16px; font-size: 9.300px; padding-left: 2px; }
.s3 .rate { gap: 5px; margin: 1px 1px 11px 0; }
.s3 .rate svg { margin-top: -4px; }
.s3 .btn { width: 41px; height: 16px; line-height: 14px; font-size: 9.300px; }

/* status bar */
.status { height: 33px; flex: none; border-top: 1px solid #bdbdbd; background: #f1f1f1; display: flex; align-items: center; padding: 0 0 1px 7px; font-size: 15.500px; letter-spacing: -.2px; color: #555; }
.st1 { width: 97px; } .st2 { width: 77px; } .st3 { margin-left: 18px; }
.st-right { margin-left: auto; display: flex; align-items: center; height: 32px; }
.view-on { width: 45px; height: 32px; margin: 0 13px; background: #c8c8c8; display: flex; align-items: center; justify-content: center; }
.zoomer { margin-left: 18px; }
.pct { margin-left: 16px; width: 49px; }

/* taskbar */
.taskbar { height: 60px; flex: none; background: linear-gradient(90deg, #cfe6ee, #d2e3ed 50%, #d5dcea 85%, #d5dbea); display: flex; color: #111; }
.start { width: 72px; display: flex; align-items: center; justify-content: center; }
.search { width: 516px; background: #fff; border: 2px solid #cacaca; border-right: 0; display: flex; align-items: center; padding-left: 16px; font-size: 21.500px; color: #222; }
.search span { margin: 2px 0 0 17px; }
.petra { margin: -2px 0 -2px auto; }
.apps { width: 522px; margin-right: 203px; display: grid; grid-template-columns: 72px 72px 82px 67px 83px 64px 82px; }
.apps span { display: flex; align-items: center; justify-content: center; }
.r1 { background: linear-gradient(#0078d7, #0078d7) 11px 57px / 61px 3px no-repeat; }
.r2 { background: linear-gradient(90deg, #0078d7 80%, #66ade6 80%) 12px 57px / 61px 3px no-repeat; }
.r3 { background: linear-gradient(#0078d7, #0078d7) 9px 57px / 73px 3px no-repeat, linear-gradient(#ecf3f8, #ecf3f8) 9px 0 / 73px 60px no-repeat; padding-left: 8px; }
.drawio { padding-left: 4px; }
.tray { display: flex; align-items: center; flex: 1; }
.battery { width: 74px; height: 30px; border: 3px solid #fff; background: linear-gradient(90deg, #18994b 60px, #000 60px 66px, #fff 66px); color: #fff; font-size: 18.500px; line-height: 26px; padding-left: 16px; }
.nub { width: 3px; height: 14px; background: #fff; }
.moon { margin-left: 65px; }
.temp { margin-left: 14px; width: 70px; font-size: 19px; letter-spacing: -.2px; padding-top: 3px; }
.chev { margin-left: -1px; }
.upd { margin-left: 14px; } .spk { margin-left: 12px; }
.eng { margin-left: 18px; width: 46px; font-size: 16.500px; }
.clock { width: 111px; display: flex; flex-direction: column; align-items: center; font-size: 17px; letter-spacing: -.1px; line-height: 28px; padding-bottom: 1px; }
.date { letter-spacing: .35px; }
.note { position: relative; margin-left: 19px; }
.note b { position: absolute; left: 11px; top: 12px; width: 24px; height: 24px; border: 1px solid #888; border-radius: 50%; background: #d3d5da; text-align: center; font-size: 15px; line-height: 22px; font-weight: 600; }
.peek { align-self: stretch; width: 1px; margin-left: 31px; background: #a3adbd; }
```
